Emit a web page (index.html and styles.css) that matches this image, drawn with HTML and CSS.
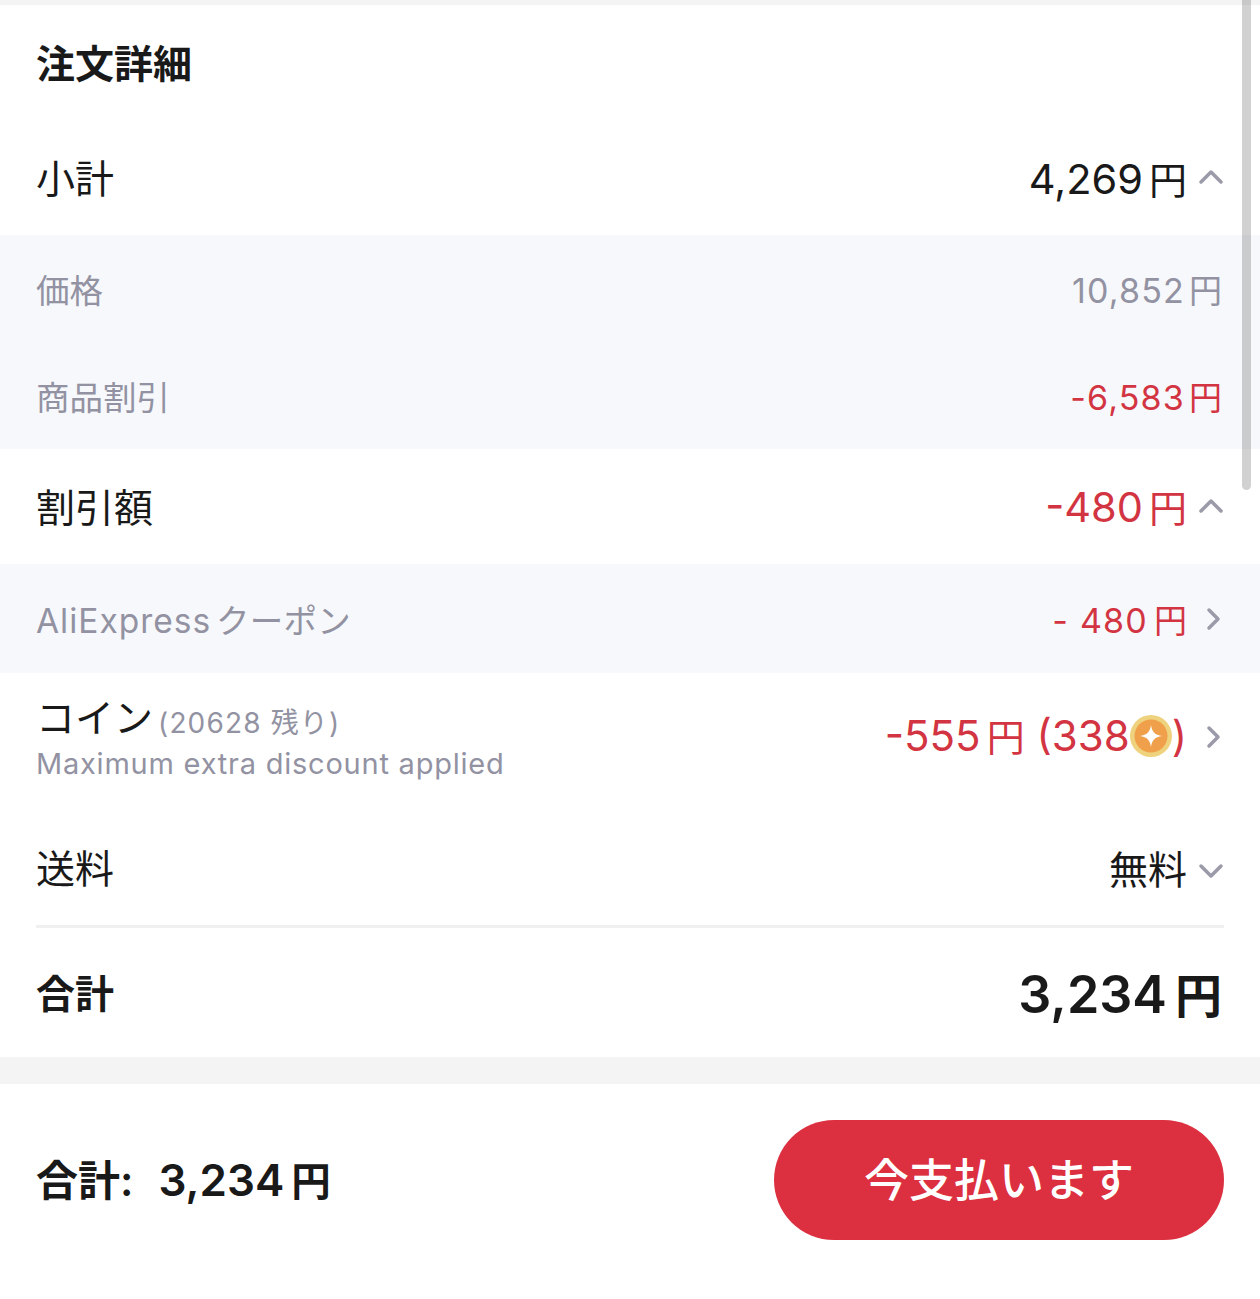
FILE: index.html
```html
<!DOCTYPE html>
<html lang="ja">
<head>
    <meta charset="UTF-8">
    <meta name="viewport" content="width=device-width, initial-scale=1.0">
    <title>注文詳細</title>
    <link rel="stylesheet" href="styles.css">
</head>
<body>
    <main class="details">
        <h1 class="title">注文詳細</h1>

        <div class="row row-subtotal">
            <span class="label">小計</span>
            <div class="value">
                <span>4,269<span class="yen">円</span></span>
                <svg class="chev" viewBox="0 0 26 26"><path d="M3 16 L13 6 L23 16"/></svg>
            </div>
        </div>

        <div class="sub-group">
            <div class="row sub">
                <span>価格</span>
                <span class="sub-num">10,852<span class="yen">円</span></span>
            </div>
            <div class="row sub">
                <span>商品割引</span>
                <span class="sub-num red">-6,583<span class="yen">円</span></span>
            </div>
        </div>

        <div class="row row-discount">
            <span class="label">割引額</span>
            <div class="value red">
                <span>-480<span class="yen">円</span></span>
                <svg class="chev" viewBox="0 0 26 26"><path d="M3 16 L13 6 L23 16"/></svg>
            </div>
        </div>

        <div class="sub-group">
            <div class="row sub coupon">
                <span class="coupon-name"><span class="latin">AliExpress</span> クーポン</span>
                <div class="value coupon-val red">
                    <span>- 480<span class="yen">円</span></span>
                    <svg class="chev" viewBox="0 0 26 26"><path d="M11 4 L20 13 L11 22"/></svg>
                </div>
            </div>
        </div>

        <div class="row row-coin">
            <div>
                <div class="label">コイン<span class="left">(20628 残り)</span></div>
                <div class="note">Maximum extra discount applied</div>
            </div>
            <div class="value red">
                <span class="coin-text">-555<span class="yen">円</span> (338<svg class="coin" viewBox="0 0 42 42"><circle cx="21" cy="21" r="21" fill="#efd27e"/><circle cx="21" cy="21" r="16.500" fill="#f0a04b"/><path d="M21 10 C22 17 25 20 32 21 C25 22 22 25 21 32 C20 25 17 22 10 21 C17 20 20 17 21 10Z" fill="#fff"/></svg>)</span>
                <svg class="chev" viewBox="0 0 26 26"><path d="M11 4 L20 13 L11 22"/></svg>
            </div>
        </div>

        <div class="shipping">
            <div class="row row-ship">
                <span class="label">送料</span>
                <div class="value">
                    <span class="free">無料</span>
                    <svg class="chev" viewBox="0 0 26 26"><path d="M3 10 L13 20 L23 10"/></svg>
                </div>
            </div>
        </div>

        <div class="row row-total">
            <span class="label bold">合計</span>
            <span class="total">3,234<span class="yen">円</span></span>
        </div>
    </main>

    <footer class="paybar">
        <div class="pay-total">合計:<span class="pay-num">3,234<span class="yen">円</span></span></div>
        <button class="pay-btn">今支払います</button>
    </footer>

    <div class="scrollbar"></div>
</body>
</html>
```

FILE: styles.css
```css
* {
    box-sizing: border-box;
}
body {
    margin: 0;
    height: 1299px;
    overflow: hidden;
    position: relative;
    background-color: #fff;
    color: #191919;
    font-family: Inter, "Noto Sans CJK JP", sans-serif;
}
.details {
    border-top: 5px solid #f4f4f4;
    border-bottom: 27px solid #f4f4f4;
}
.title {
    margin: 0;
    height: 118px;
    padding: 34px 36px 0;
    font-size: 39px;
    line-height: 50px;
    font-weight: 700;
}
.row {
    display: flex;
    justify-content: space-between;
    align-items: center;
    padding: 0 36px;
}
.label {
    font-size: 39px;
    line-height: 50px;
}
.value {
    display: flex;
    align-items: center;
    font-size: 41.500px;
    white-space: nowrap;
}
.value > span {
    margin-bottom: 4px;
}
.yen {
    margin-left: 6px;
    font-size: 38px;
}
.red {
    color: #d33442;
}
.chev {
    width: 26px;
    height: 26px;
    margin-left: 11px;
    fill: none;
    stroke: #9a9aa8;
    stroke-width: 3.500;
    stroke-linecap: round;
    stroke-linejoin: round;
}
.row-subtotal {
    height: 112px;
}
.sub-group {
    background-color: #f7f8fb;
}
.sub {
    height: 107px;
    color: #9292a2;
    font-size: 33.500px;
}
.sub-num {
    margin-right: 2px;
    font-size: 34px;
    letter-spacing: 1.200px;
}
.sub-num .yen {
    margin-left: 4px;
    font-size: 33px;
    letter-spacing: 0;
}
.row-discount {
    height: 115px;
    padding-top: 2px;
}
.coupon {
    height: 109px;
}
.coupon-name {
    letter-spacing: 0.250px;
    word-spacing: -5px;
}
.latin {
    letter-spacing: 1px;
}
.coupon-val {
    font-size: 34px;
    letter-spacing: 1.200px;
}
.coupon-val > span {
    margin-bottom: 0;
}
.coupon-val .yen {
    font-size: 33px;
    letter-spacing: 0;
}
.row-coin {
    height: 132px;
    padding-bottom: 5px;
}
.left {
    margin-left: 5px;
    font-size: 28px;
    color: #9292a2;
    letter-spacing: 1.150px;
    position: relative;
    top: 1px;
}
.note {
    font-size: 29px;
    line-height: 33px;
    color: #9292a2;
    letter-spacing: 0.770px;
}
.coin-text {
    font-size: 42px;
}
.coin {
    width: 42px;
    height: 42px;
    vertical-align: -6px;
}
.shipping {
    padding: 0 36px;
    height: 123px;
}
.row-ship {
    padding: 7px 0 0;
    height: 100%;
    border-bottom: 3px solid #f0f0f0;
}
.free {
    font-size: 39px;
}
.row-total {
    height: 129px;
}
.bold {
    font-weight: 700;
    margin-top: 3px;
}
.total {
    margin-right: 2px;
    font-size: 52px;
    font-weight: 600;
}
.total .yen {
    margin-left: 8px;
    font-size: 47px;
}
.paybar {
    display: flex;
    justify-content: space-between;
    align-items: center;
    height: 192px;
    padding: 0 36px;
}
.pay-total {
    font-size: 42px;
    font-weight: 600;
    padding-bottom: 6px;
}
.pay-num {
    margin-left: 25px;
    font-size: 44px;
}
.pay-num .yen {
    margin-left: 7px;
    font-size: 39.500px;
}
.pay-btn {
    width: 450px;
    height: 120px;
    padding: 0 0 6px;
    border: 0;
    border-radius: 60px;
    background-color: #dc3040;
    color: #fff;
    font-family: inherit;
    font-size: 45px;
    font-weight: 500;
}
.scrollbar {
    position: absolute;
    top: 0;
    left: 1242px;
    width: 9px;
    height: 490px;
    border-radius: 0 0 5px 5px;
    background-color: rgba(0, 0, 0, 0.18);
}
```
